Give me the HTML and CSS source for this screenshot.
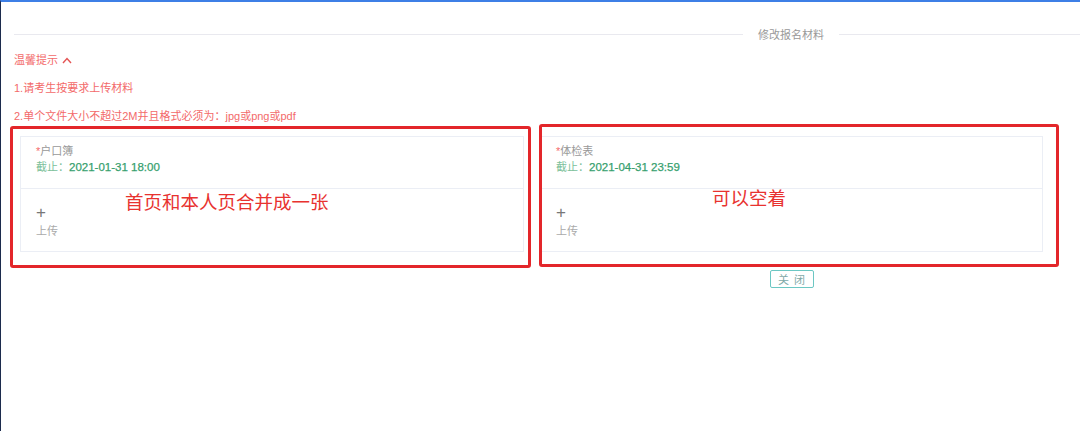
FILE: index.html
```html
<!DOCTYPE html>
<html lang="zh-CN">
<head>
    <meta charset="UTF-8">
    <meta name="viewport" content="width=device-width, initial-scale=1.0">
    <title>修改报名材料</title>
    <link rel="stylesheet" href="styles.css">
</head>
<body>
    <div class="frame">
        <div class="dialog">
            <div class="divider">
                <span class="divider-line"></span>
                <span class="divider-text">修改报名材料</span>
                <span class="divider-line divider-tail"></span>
            </div>

            <div class="tips">
                <div class="tips-title">温馨提示
                    <svg class="chevron" width="10" height="7" viewBox="0 0 10 7"><path d="M1 6 L5 1.5 L9 6" fill="none" stroke="currentColor" stroke-width="1.4"/></svg>
                </div>
                <div>1.请考生按要求上传材料</div>
                <div>2.单个文件大小不超过2M并且格式必须为：jpg或png或pdf</div>
            </div>

            <div class="cards">
                <div class="card">
                    <div class="card-head">
                        <div class="card-label"><span class="required">*</span>户口簿</div>
                        <div class="card-deadline">截止：<b>2021-01-31 18:00</b></div>
                    </div>
                    <div class="card-body">
                        <div class="plus">+</div>
                        <div class="upload">上传</div>
                    </div>
                    <!-- red note drawn over the screenshot -->
                    <div class="mark mark-first"></div>
                    <div class="note note-first">首页和本人页合并成一张</div>
                </div>
                <div class="card">
                    <div class="card-head">
                        <div class="card-label"><span class="required">*</span>体检表</div>
                        <div class="card-deadline">截止：<b>2021-04-31 23:59</b></div>
                    </div>
                    <div class="card-body">
                        <div class="plus">+</div>
                        <div class="upload">上传</div>
                    </div>
                    <div class="mark mark-second"></div>
                    <div class="note note-second">可以空着</div>
                </div>
            </div>

            <div class="footer">
                <button class="close-btn">关 闭</button>
            </div>
        </div>
    </div>
</body>
</html>
```

FILE: styles.css
```css
body {
    margin: 0;
    background-color: #fff;
    font-family: "Liberation Sans", "Noto Sans CJK SC", sans-serif;
    overflow: hidden;
}

.frame {
    height: 431px;
    box-sizing: border-box;
    border-top: 2px solid #3d7fe6;
    border-left: 1px solid #1c2b4d;
}

.dialog {
    padding-left: 13px;
}

.divider {
    display: flex;
    align-items: center;
    height: 20px;
    margin-top: 22px;
}

.divider-line {
    flex: 1;
    border-top: 1px solid #e9e9ef;
}

.divider-tail {
    flex: 0 0 241px;
}

.divider-text {
    padding: 0 15px;
    font-size: 11px;
    color: #999;
}

.tips {
    margin-top: 2px;
    font-size: 11px;
    line-height: 28px;
    color: #f36a6a;
}

.tips-title {
    display: flex;
    align-items: center;
    gap: 4px;
}

.chevron {
    color: #e45454;
}

.cards {
    display: grid;
    grid-template-columns: 504px 503px;
    gap: 16px;
    margin-top: 6px;
    padding-left: 6px;
}

.card {
    position: relative;
    border: 1px solid #ebeef5;
}

.card-head {
    height: 52px;
    box-sizing: border-box;
    padding: 6px 15px;
    border-bottom: 1px solid #ebeef5;
    font-size: 11px;
    line-height: 16px;
}

.card-label {
    color: #999;
}

.required {
    color: #f56c6c;
}

.card-deadline {
    color: #7cbf9a;
}

.card-deadline b {
    font-weight: normal;
    font-size: 11.5px;
    color: #36a06e;
    -webkit-text-stroke: 0.25px #36a06e;
}

.card-body {
    height: 62px;
    box-sizing: border-box;
    padding: 14px 15px 0;
    color: #aaa;
    font-size: 11px;
}

.plus {
    font-size: 17px;
    line-height: 20px;
    color: #777;
}

.upload {
    line-height: 16px;
}

.mark {
    position: absolute;
    border: 3px solid #e3262a;
    border-radius: 3px;
    pointer-events: none;
}

.mark-first {
    left: -11px;
    top: -11px;
    right: -8px;
    bottom: -17px;
}

.mark-second {
    left: -2px;
    top: -13px;
    right: -17px;
    bottom: -16px;
}

.note {
    position: absolute;
    font-size: 18.5px;
    line-height: 22px;
    color: #e8322f;
}

.note-first {
    left: 104px;
    top: 55px;
}

.note-second {
    left: 171px;
    top: 51px;
}

/* button sits under the second card */
.footer {
    display: grid;
    grid-template-columns: 504px 503px;
    gap: 16px;
    justify-items: center;
    margin-top: 18px;
    padding-left: 6px;
}

.close-btn {
    grid-column: 2;
    width: 44px;
    height: 18px;
    padding: 0;
    border: 1px solid #6cc7c3;
    border-radius: 2px;
    background-color: #fff;
    color: #7fa9a8;
    font-family: inherit;
    font-size: 11px;
    letter-spacing: 1px;
    text-indent: 1px;
}
```
